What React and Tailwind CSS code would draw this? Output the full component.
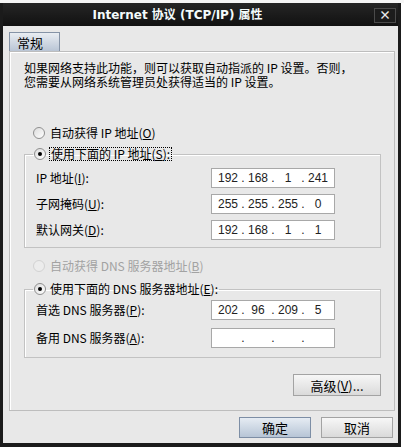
import React from 'react';

const cjk = 'font-["Noto_Sans_CJK_SC",sans-serif]';

const Radio = ({ checked, disabled }) => (
  <span
    className={`flex h-[12px] w-[12px] shrink-0 items-center justify-center rounded-full border ${
      disabled
        ? 'border-[#d2d2d2] bg-[#ececec]'
        : 'border-[#8f8f8f] bg-gradient-to-br from-[#dcdcdc] to-white'
    }`}
  >
    {checked && <span className="h-[4px] w-[4px] rounded-full bg-black" />}
  </span>
);

const IpBox = ({ parts }) => (
  <div className="flex h-[20px] w-[124px] items-center border border-[#a8a8a8] bg-white pl-[4px] font-['Liberation_Sans',sans-serif] text-[12px] leading-none text-[#222]">
    {parts.map((p, i) => (
      <React.Fragment key={i}>
        {i > 0 && <span className="w-[6px] text-center">.</span>}
        <span className="w-[24px] text-center">{p}</span>
      </React.Fragment>
    ))}
  </div>
);

const Row = ({ label, parts }) => (
  <div className="flex items-center">
    <span className="w-[175px] text-[12px] leading-[14px]">{label}</span>
    <IpBox parts={parts} />
  </div>
);

const Button = ({ children, primary, className = '' }) => (
  <button
    className={`flex items-center justify-center border text-[13px] leading-none text-black ${
      primary
        ? 'border-[#7d8ea5] bg-gradient-to-b from-[#e6ecf3] to-[#b7c5d6]'
        : 'border-[#a3a3a3] bg-gradient-to-b from-[#f7f7f7] to-[#dadada]'
    } ${className}`}
  >
    {children}
  </button>
);

export default function App() {
  return (
    <div className={`h-[447px] w-[404px] overflow-hidden bg-white ${cjk}`}>
      <div className="h-[3px] bg-[#f6f6f6]" />
      <div className="flex h-[444px] w-[401px] flex-col border-x-[3px] border-b-[4px] border-[#1b1b1b]">
        {/* title bar */}
        <div className="flex h-[23px] items-center bg-gradient-to-b from-[#262626] to-[#111] pt-[1px]">
          <div className="mr-[22px] flex-1 text-center font-['DejaVu_Sans','Noto_Sans_CJK_SC',sans-serif] text-[12px] font-bold text-[#f4fbfb]">
            Internet 协议 (TCP/IP) 属性
          </div>
          <div className="mr-[2px] flex h-[15px] w-[22px] items-center justify-center border border-[#4a4a4a] bg-[#1c1c1c] text-[12px] font-bold leading-none text-[#e8e8e8]">
            ×
          </div>
        </div>

        {/* body */}
        <div className="flex flex-1 flex-col bg-[#e8e8e8] pl-[6px] text-black">
          <div className="mt-[6px] flex h-[20px] w-[51px] items-center border border-[#8593a6] bg-gradient-to-b from-[#e9edf2] to-[#b9c5d5] pl-[7px] text-[13px] leading-none">
            常规
          </div>

          <div className="-mt-[1px] flex h-[360px] w-[386px] flex-col border border-[#bdbdbd] shadow-[inset_1px_1px_0_#fff]">
            <p className="ml-[14px] mt-[9px] text-[12px] leading-[14px]">
              如果网络支持此功能，则可以获取自动指派的 IP 设置。否则，
              <br />
              您需要从网络系统管理员处获得适当的 IP 设置。
            </p>

            <div className="ml-[23px] mt-[37px] flex h-[14px] items-center gap-[5px] text-[12px] leading-[14px]">
              <Radio />
              <span>
                自动获得 IP 地址(<u>O</u>)
              </span>
            </div>

            <fieldset className="ml-[14px] mr-[13px] mt-[7px] border border-[#c2c2c2] pb-[7px] shadow-[inset_1px_1px_0_#fff]">
              <legend className="ml-[8px] px-[1px]">
                <span className="flex h-[14px] items-center gap-[3px] text-[12px] leading-[14px]">
                  <Radio checked />
                  <span className="border border-dotted border-black px-[1px] leading-[12px]">
                    使用下面的 IP 地址(<u>S</u>):
                  </span>
                </span>
              </legend>
              <div className="mt-[7px] flex flex-col gap-[6px] pl-[11px]">
                <Row label={<>IP 地址(<u>I</u>):</>} parts={['192', '168', '1', '241']} />
                <Row label={<>子网掩码(<u>U</u>):</>} parts={['255', '255', '255', '0']} />
                <Row label={<>默认网关(<u>D</u>):</>} parts={['192', '168', '1', '1']} />
              </div>
            </fieldset>

            <div className="ml-[23px] mt-[11px] flex h-[14px] items-center gap-[5px] text-[12px] leading-[14px] text-[#a2a2a2]">
              <Radio disabled />
              <span>
                自动获得 DNS 服务器地址(<u>B</u>)
              </span>
            </div>

            <fieldset className="ml-[14px] mr-[13px] mt-[9px] border border-[#c2c2c2] pb-[9px] shadow-[inset_1px_1px_0_#fff]">
              <legend className="ml-[8px] px-[1px]">
                <span className="flex h-[14px] items-center gap-[4px] text-[12px] leading-[14px]">
                  <Radio checked />
                  <span>
                    使用下面的 DNS 服务器地址(<u>E</u>):
                  </span>
                </span>
              </legend>
              <div className="mt-[4px] flex flex-col gap-[8px] pl-[11px]">
                <Row label={<>首选 DNS 服务器(<u>P</u>):</>} parts={['202', '96', '209', '5']} />
                <Row label={<>备用 DNS 服务器(<u>A</u>):</>} parts={['', '', '', '']} />
              </div>
            </fieldset>

            <div className="mr-[13px] mt-[16px] flex justify-end">
              <Button className="h-[22px] w-[88px]">
                高级(<u>V</u>)...
              </Button>
            </div>
          </div>

          <div className="mt-[6px] flex w-[386px] justify-end gap-[10px] pr-[2px]">
            <Button primary className="h-[21px] w-[72px]">
              确定
            </Button>
            <Button className="h-[21px] w-[72px]">取消</Button>
          </div>
        </div>
      </div>
    </div>
  );
}
